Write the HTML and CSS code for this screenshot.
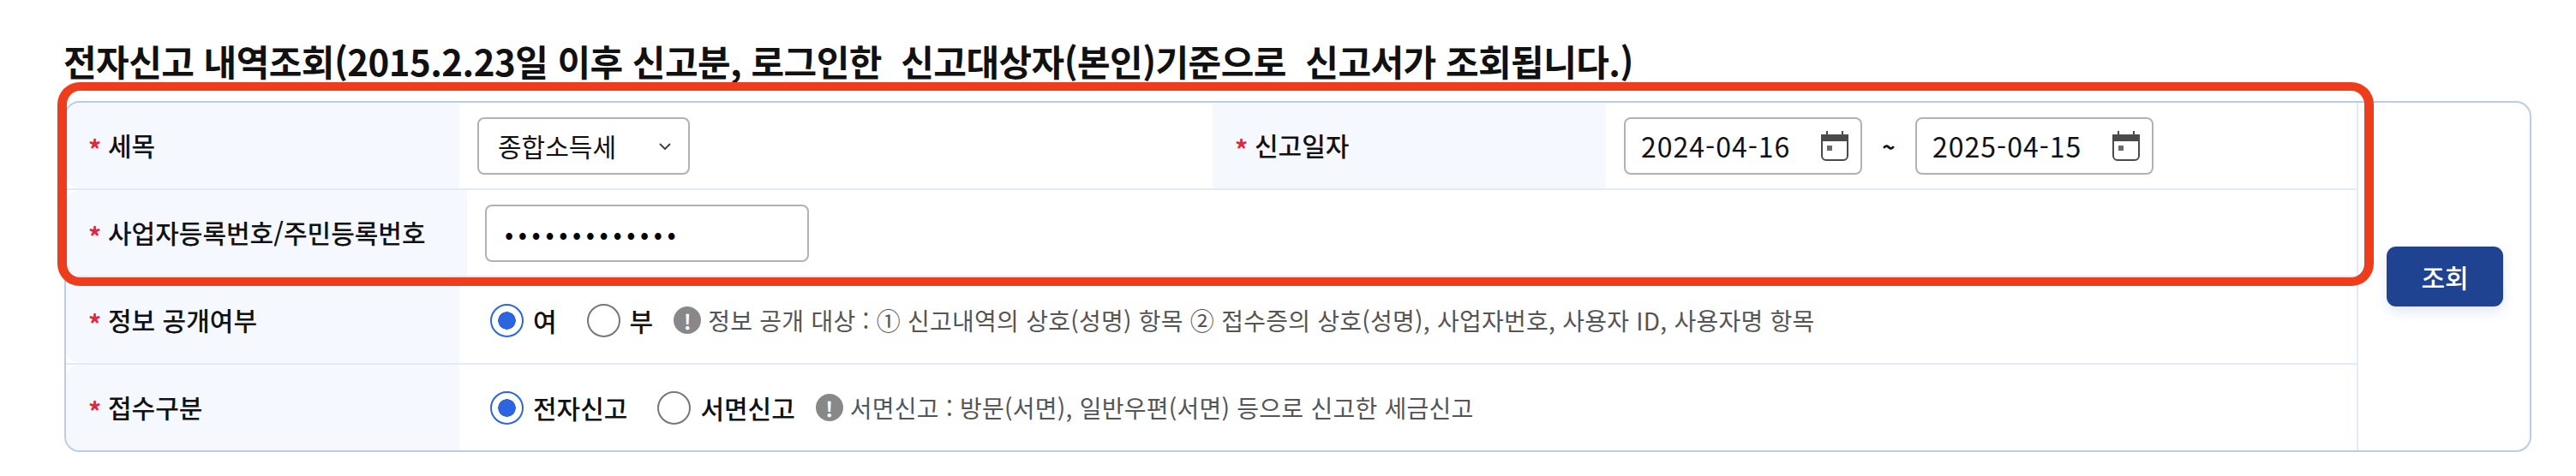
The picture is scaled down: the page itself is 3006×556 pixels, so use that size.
FILE: index.html
```html
<!DOCTYPE html>
<html lang="ko">
<head>
    <meta charset="UTF-8">
    <title>전자신고 내역조회</title>
    <link rel="stylesheet" href="styles.css">
</head>
<body>
<div class="page">
    <h2 class="page_title">전자신고 내역조회(2015.2.23일 이후 신고분, 로그인한&nbsp; 신고대상자(본인)기준으로&nbsp; 신고서가 조회됩니다.)</h2>

    <form class="search_box">
        <div class="search_rows">
            <div class="row">
                <div class="th"><span class="req">*</span>세목</div>
                <div class="td td_half">
                    <div class="select_box">
                        <select class="select_tax">
                            <option>종합소득세</option>
                        </select>
                        <svg class="chevron" width="14" height="8" viewBox="0 0 14 8"><path d="M1 1l6 6 6-6" fill="none" stroke="#444" stroke-width="2"/></svg>
                    </div>
                </div>
                <div class="th th_date"><span class="req">*</span>신고일자</div>
                <div class="td td_date">
                    <div class="date_box">
                        <input class="date_input" type="text" value="2024-04-16">
                        <svg class="cal" width="32" height="35" viewBox="0 0 32 35"><path d="M6 0h2v5H6zM24 0h2v5h-2zM0 4h32v8H0z" fill="#4a4a4a"/><path d="M1 5v24a5 5 0 0 0 5 5h20a5 5 0 0 0 5-5V5" fill="none" stroke="#4a4a4a" stroke-width="2"/><rect x="7" y="17" width="6" height="6" fill="#6a6a6a"/></svg>
                    </div>
                    <span class="tilde">~</span>
                    <div class="date_box">
                        <input class="date_input" type="text" value="2025-04-15">
                        <svg class="cal" width="32" height="35" viewBox="0 0 32 35"><path d="M6 0h2v5H6zM24 0h2v5h-2zM0 4h32v8H0z" fill="#4a4a4a"/><path d="M1 5v24a5 5 0 0 0 5 5h20a5 5 0 0 0 5-5V5" fill="none" stroke="#4a4a4a" stroke-width="2"/><rect x="7" y="17" width="6" height="6" fill="#6a6a6a"/></svg>
                    </div>
                </div>
            </div>

            <div class="row">
                <div class="th th_wide"><span class="req">*</span>사업자등록번호/주민등록번호</div>
                <div class="td">
                    <input class="text_input" type="password" value="1234567890123">
                </div>
            </div>

            <div class="row">
                <div class="th"><span class="req">*</span>정보 공개여부</div>
                <div class="td">
                    <label class="radio_item"><span class="radio on"></span>여</label>
                    <label class="radio_item"><span class="radio"></span>부</label>
                    <p class="note"><span class="info">!</span>정보 공개 대상 : ① 신고내역의 상호(성명) 항목 ② 접수증의 상호(성명), 사업자번호, 사용자 ID, 사용자명 항목</p>
                </div>
            </div>

            <div class="row">
                <div class="th"><span class="req">*</span>접수구분</div>
                <div class="td">
                    <label class="radio_item"><span class="radio on"></span>전자신고</label>
                    <label class="radio_item"><span class="radio"></span>서면신고</label>
                    <p class="note"><span class="info">!</span>서면신고 : 방문(서면), 일반우편(서면) 등으로 신고한 세금신고</p>
                </div>
            </div>
        </div>

        <div class="search_btn">
            <button class="btn_sub" type="button">조회</button>
        </div>

        <!--강조 표시-->
        <div class="highlight"></div>
    </form>
</div>
</body>
</html>
```

FILE: styles.css
```css
* {
    margin: 0;
    padding: 0;
    box-sizing: border-box;
}

body {
    background: #fff;
    color: #111;
    font-family: "Noto Sans CJK KR", "Noto Sans", sans-serif;
}

.page {
    padding: 46px 52px 0 75px;
}

.page_title {
    margin-left: -1px;
    margin-bottom: 22px;
    font-size: 42px;
    line-height: 50px;
    font-weight: 700;
    letter-spacing: -0.55px;
    white-space: nowrap;
}

.search_box {
    position: relative;
    display: flex;
    width: 2879px;
    height: 410px;
    border: 2px solid #b9cce9;
    border-radius: 18px;
}

.search_rows {
    width: 2675px;
    border-right: 2px solid #e2eaf8;
}

.row {
    display: flex;
    height: 102px;
    border-bottom: 2px solid #e2eaf8;
}

.row:last-child {
    height: 100px;
    border-bottom: 0;
}

.th {
    display: flex;
    align-items: center;
    width: 459px;
    padding: 0 0 2px 26px;
    font-size: 30px;
    font-weight: 500;
    background: #f5f8ff;
    border-radius: 16px 0 0 16px;
}

.th_wide {
    width: 468px;
}

.th_date {
    border-radius: 0;
}

.req {
    width: 23px;
    padding-top: 8px;
    color: #e0293f;
    font-size: 30px;
    font-weight: 700;
}

.td {
    display: flex;
    flex: 1;
    align-items: center;
    padding-left: 36px;
    font-size: 30px;
    font-weight: 500;
}

.th_wide + .td {
    padding-left: 21px;
}

.td_half {
    flex: none;
    width: 879px;
    padding-left: 21px;
}

.td_date {
    padding-left: 21px;
}

.select_box {
    position: relative;
    width: 248px;
    height: 67px;
}

.select_tax {
    width: 100%;
    height: 100%;
    padding-left: 22px;
    border: 2px solid #b2b2b2;
    border-radius: 8px;
    background: #fff;
    appearance: none;
    font: 400 30px "Noto Sans CJK KR", sans-serif;
    color: #111;
}

.chevron {
    position: absolute;
    top: 30px;
    right: 22px;
}

.text_input {
    width: 378px;
    height: 67px;
    padding-left: 21px;
    border: 2px solid #b2b2b2;
    border-radius: 8px;
    font: 400 30px "Noto Sans CJK KR", sans-serif;
    letter-spacing: 5.6px;
}

.date_box {
    display: flex;
    align-items: center;
    width: 278px;
    height: 67px;
    padding: 0 14px 0 18px;
    border: 2px solid #b2b2b2;
    border-radius: 8px;
}

.date_input {
    width: 100%;
    border: 0;
    outline: 0;
    font: 400 32px "Noto Sans CJK KR", sans-serif;
    letter-spacing: 1px;
    color: #111;
}

.cal {
    flex: none;
}

.tilde {
    width: 62px;
    text-align: center;
    font-size: 26px;
    font-weight: 700;
}

.radio_item {
    display: flex;
    align-items: center;
    gap: 11px;
    margin-right: 35px;
}

.radio_item + .radio_item {
    margin-right: 24px;
}

.radio {
    width: 39px;
    height: 39px;
    border: 2px solid #777;
    border-radius: 50%;
    background: #fff;
}

.radio.on {
    border-color: #2b66e0;
    background: radial-gradient(circle, #2b66e0 0 10px, #fff 10.5px);
}

.note {
    display: flex;
    align-items: center;
    font-size: 28px;
    font-weight: 400;
    letter-spacing: .25px;
    color: #555;
}

.info {
    display: flex;
    flex: none;
    align-items: center;
    justify-content: center;
    width: 32px;
    height: 32px;
    margin-right: 8px;
    border-radius: 50%;
    background: #888;
    color: #fff;
    font-size: 24px;
    font-weight: 700;
}

.search_btn {
    display: flex;
    flex: 1;
    align-items: center;
    justify-content: center;
}

.btn_sub {
    width: 136px;
    height: 70px;
    margin-left: 2px;
    border: 0;
    border-radius: 11px;
    background: #1f4391;
    box-shadow: 0 6px 14px rgba(60, 100, 220, .15);
    color: #fff;
    font: 500 30px "Noto Sans CJK KR", sans-serif;
}

.highlight {
    position: absolute;
    top: -24px;
    left: -10px;
    width: 2703px;
    height: 238px;
    border-style: solid;
    border-color: #ed3d1c;
    border-width: 10px 11px;
    border-radius: 26px;
    pointer-events: none;
}
```
